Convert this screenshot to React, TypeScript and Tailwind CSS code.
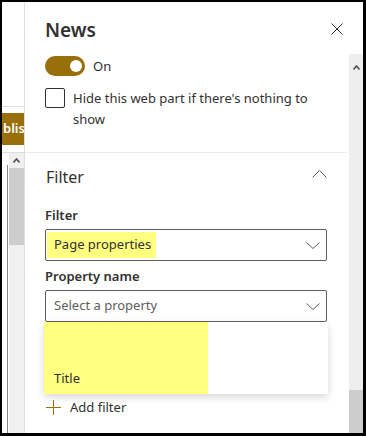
import React from 'react';

const ChevronDown = () => (
  <svg width="14" height="7" viewBox="0 0 14 7" className="shrink-0">
    <path d="M0.5 0.5 L7 6.5 L13.5 0.5" fill="none" stroke="#605e5c" strokeWidth="1" />
  </svg>
);

const Dropdown = ({ children }: { children: React.ReactNode }) => (
  <div className="flex h-[32px] items-center justify-between rounded-[2px] border border-[#605e5c] bg-white pr-[6px]">
    {children}
    <ChevronDown />
  </div>
);

const App = () => {
  return (
    <div className="h-[436px] w-[366px] overflow-hidden border-t-2 border-l-2 border-r-[3px] border-b-[3px] border-black bg-white font-['Noto_Sans',sans-serif] text-[#323130]">
      <div className="flex h-full">
        {/* page behind the panel */}
        <div className="flex w-[22px] shrink-0 flex-col">
          <div className="h-[105px] border-b border-[#e1dfdd]" />
          <div className="mt-[6px] flex h-[32px] items-center overflow-hidden whitespace-nowrap bg-[#986f0b] pl-[1px] text-[13px] font-semibold text-white">
            blis
          </div>
          <div className="h-[8px] border-b border-[#e1dfdd]" />
          <div className="flex flex-1">
            <div className="w-[5px]" />
            <div className="mt-[12px] w-[1px] bg-[#8a8886]" />
            <div className="w-[1px]" />
            <div className="flex w-[15px] flex-col bg-[#f0f0f0]">
              <div className="flex h-[15px] items-center justify-center">
                <svg width="7" height="5" viewBox="0 0 7 5">
                  <path d="M0.5 4.5 L3.5 1 L6.5 4.5" fill="none" stroke="#505050" strokeWidth="1.6" />
                </svg>
              </div>
              <div className="h-[77px] bg-[#cdcdcd]" />
            </div>
          </div>
        </div>

        {/* property pane */}
        <div className="flex flex-1 flex-col border-l border-[#e1dfdd]">
          <div className="flex h-[52px] shrink-0 items-start justify-between pl-5 pr-5">
            <div className="mt-[14px] text-[19px] font-semibold leading-[28px]">News</div>
            <svg width="12" height="12" viewBox="0 0 12 12" className="mt-[21px]">
              <path d="M0.5 0.5 L11.5 11.5 M11.5 0.5 L0.5 11.5" stroke="#323130" strokeWidth="1" />
            </svg>
          </div>

          <div className="flex flex-1">
            <div className="relative flex-1">
              <div className="pl-5 pr-[22px]">
                <div className="mt-[2px] flex h-[20px] items-center">
                  <div className="flex h-[20px] w-[40px] items-center justify-end rounded-full bg-[#986f0b] pr-[3px]">
                    <div className="h-[12px] w-[12px] rounded-full bg-white" />
                  </div>
                  <span className="ml-2 text-[13px] leading-[20px]">On</span>
                </div>
                <div className="mt-[12px] flex items-start">
                  <div className="h-[20px] w-[20px] shrink-0 rounded-[2px] border border-[#323130]" />
                  <span className="ml-2 text-[13px] leading-[21px]">Hide this web part if there's nothing to show</span>
                </div>
              </div>

              <div className="mr-[2px] mt-[22px] h-[1px] bg-[#edebe9]" />

              <div className="pl-5 pr-[22px]">
                <div className="mt-[13px] flex items-start justify-between">
                  <span className="pl-[1px] text-[16px] leading-[22px]">Filter</span>
                  <svg width="15" height="8" viewBox="0 0 15 8" className="mt-[4px]">
                    <path d="M0.5 7.5 L7.5 0.5 L14.5 7.5" fill="none" stroke="#605e5c" strokeWidth="1" />
                  </svg>
                </div>

                <div className="mt-[17px] text-[13px] font-semibold leading-[20px]">Filter</div>
                <div className="mt-[4px]">
                  <Dropdown>
                    <span className="ml-[1px] flex h-[26px] items-center bg-[#ffff80] pl-[7px] pr-[5px] text-[13px]">
                      Page properties
                    </span>
                  </Dropdown>
                </div>

                <div className="mt-[5px] text-[13px] font-semibold leading-[20px]">Property name</div>
                <div className="relative mt-[4px]">
                  <Dropdown>
                    <span className="pl-[8px] text-[13px] text-[#605e5c]">Select a property</span>
                  </Dropdown>
                  <div className="absolute left-[-1px] right-[-1px] top-[32px] z-10 flex h-[72px] bg-white shadow-[0_3px_8px_rgba(0,0,0,0.16)]">
                    <div className="flex w-[164px] items-end bg-[#ffff80] pb-[6px] pl-[10px] text-[13px] leading-[20px]">
                      Title
                    </div>
                  </div>
                </div>

                <div className="mt-[75px] flex items-center">
                  <svg width="15" height="15" viewBox="0 0 15 15" className="ml-[1px]">
                    <path d="M7.5 0 V15 M0 7.5 H15" stroke="#986f0b" strokeWidth="1" />
                  </svg>
                  <span className="ml-[9px] text-[13px] leading-[20px]">Add filter</span>
                </div>
              </div>
            </div>

            {/* panel scrollbar */}
            <div className="flex w-[14px] shrink-0 flex-col bg-[#eeeeee]">
              <div className="flex h-[17px] items-end justify-center pb-[1px]">
                <svg width="7" height="5" viewBox="0 0 7 5">
                  <path d="M0.5 4.5 L3.5 1 L6.5 4.5" fill="none" stroke="#505050" strokeWidth="1.6" />
                </svg>
              </div>
              <div className="flex-1" />
              <div className="h-[43px] bg-[#cdcdcd]" />
            </div>
          </div>
        </div>
      </div>
    </div>
  );
};

export default App;
